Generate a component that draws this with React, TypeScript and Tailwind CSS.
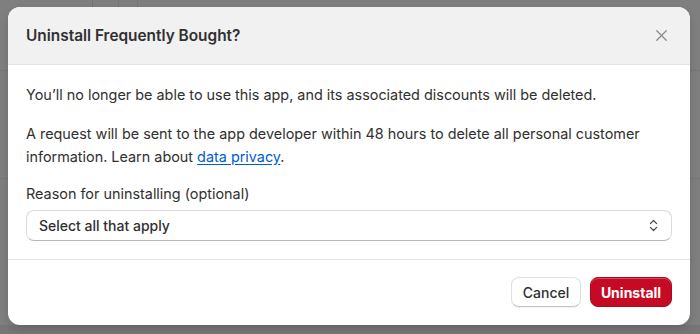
import { X, ChevronsUpDown } from "lucide-react";

export default function App() {
    return (
        <div
            className="relative w-[700px] h-[334px] overflow-hidden bg-[#7f7f7f]"
            style={{ fontFamily: "Inter, 'Noto Sans', sans-serif" }}
        >
            {/* faint page behind the overlay */}
            <div className="absolute inset-0 pointer-events-none">
                <div className="absolute top-0 bottom-0 left-[92px] w-px bg-[#737373]" />
                <div className="absolute top-0 bottom-0 left-[118px] w-px bg-[#767676]" />
                <div className="absolute top-0 bottom-0 left-[137px] w-px bg-[#767676]" />
                <div className="absolute left-0 right-0 top-[70px] h-px bg-[#777777]" />
                <div className="absolute left-0 right-0 top-[178px] h-px bg-[#777777]" />
                <div className="absolute left-0 right-0 top-[325px] bottom-0 bg-[#767676]" />
            </div>

            <div className="relative pl-[8px] pt-[7px]">
                <div className="w-[682px] h-[318px] bg-white rounded-[12px] overflow-hidden flex flex-col shadow-[0_4px_8px_rgba(0,0,0,0.15)]">
                    <div className="h-[58px] shrink-0 bg-[#f1f1f1] border-b border-[#e3e3e3] flex items-center justify-between pl-[18px] pr-[19px]">
                        <h2 className="text-[15.4px] font-semibold text-[#303030]">
                            Uninstall Frequently Bought?
                        </h2>
                        <X className="w-[19px] h-[19px] text-[#8a8a8a]" strokeWidth={1.6} />
                    </div>

                    <div className="flex-1 px-[18px] pt-[18px] text-[14.4px] leading-[23px] text-[#303030] border-b border-[#e3e3e3]">
                        <p>
                            You’ll no longer be able to use this app, and its associated discounts will be deleted.
                        </p>
                        <p className="mt-[16px]">
                            A request will be sent to the app developer within 48 hours to delete all personal customer
                            information. Learn about <a className="text-[#005bd3] underline underline-offset-2">data privacy</a>.
                        </p>
                        <p className="mt-[14px]">Reason for uninstalling (optional)</p>
                        <div className="mt-[5px] h-[31px] rounded-[8px] border border-[#dadada] border-b-[#b8b8b8] flex items-center justify-between pl-[12px] pr-[10px]">
                            <span className="text-[14px] font-medium text-[#303030]">Select all that apply</span>
                            <ChevronsUpDown className="w-[15px] h-[15px] text-[#4a4a4a]" strokeWidth={2} />
                        </div>
                    </div>

                    <div className="h-[65px] shrink-0 flex items-center justify-end gap-[9px] pr-[18px] pb-[1px]">
                        <button className="h-[30px] w-[70px] rounded-[8px] bg-white border border-[#e0e0e0] border-b-[#c4c4c4] text-[14px] font-medium text-[#303030] shadow-[0_1px_0_rgba(0,0,0,0.05)]">
                            Cancel
                        </button>
                        <button className="h-[30px] w-[82px] rounded-[8px] bg-[#c70a24] border border-[#a80a20] text-[14px] font-bold text-white shadow-[inset_0_1px_0_rgba(255,255,255,0.25)]">
                            Uninstall
                        </button>
                    </div>
                </div>
            </div>
        </div>
    );
}
